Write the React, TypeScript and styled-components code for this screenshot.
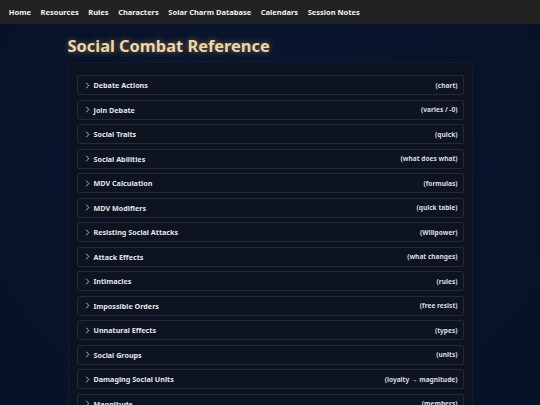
import React from "react";
import styled, { createGlobalStyle } from "styled-components";

const GlobalStyle = createGlobalStyle`
  *, *::before, *::after {
    box-sizing: border-box;
  }
  html, body {
    margin: 0;
    padding: 0;
    background: #09142b;
    font-family: "Noto Sans", "Open Sans", sans-serif;
  }
`;

const Page = styled.div`
  height: 405px;
  background: radial-gradient(ellipse at 50% 40%, #0b1733 0%, #08132a 60%, #071127 100%);
  overflow: hidden;
`;

const NavBar = styled.nav`
  display: flex;
  align-items: center;
  height: 24px;
  padding: 0 4px;
  background: #222222;
`;

const NavLink = styled.a`
  color: #f2f2f2;
  font-size: 7.5px;
  font-weight: 700;
  padding: 0 4.8px;
  text-decoration: none;
  white-space: nowrap;
`;

const Main = styled.main`
  width: 405px;
  margin: 0 auto;
`;

const Title = styled.h1`
  margin: 0;
  padding: 11px 0 5px;
  font-size: 16.4px;
  font-weight: 700;
  line-height: 22px;
  color: #ecd6ab;
  text-shadow: 0 0 6px rgba(240, 190, 100, 0.55);
`;

const Panel = styled.section`
  display: flex;
  flex-direction: column;
  gap: 4.5px;
  padding: 12px 8px;
  background: #0d1220;
  border: 1px solid #151b2a;
  border-radius: 6px;
`;

const Row = styled.div`
  display: flex;
  align-items: center;
  flex: none;
  height: 20px;
  padding: 0 5px 0 7px;
  background: #0e1320;
  border: 1px solid #222938;
  border-radius: 2px;
  color: #e2e6ec;
  font-size: 7.2px;
  font-weight: 700;
`;

const Chevron = styled.svg`
  width: 5px;
  height: 7px;
  margin-right: 4px;
  flex: none;
`;

const Label = styled.span`
  flex: 1;
`;

const Hint = styled.span`
  color: #d8dce2;
  font-size: 6.6px;
`;

const nav = ["Home", "Resources", "Rules", "Characters", "Solar Charm Database", "Calendars", "Session Notes"];

const sections: [string, string][] = [
  ["Debate Actions", "(chart)"],
  ["Join Debate", "(varies / -0)"],
  ["Social Traits", "(quick)"],
  ["Social Abilities", "(what does what)"],
  ["MDV Calculation", "(formulas)"],
  ["MDV Modifiers", "(quick table)"],
  ["Resisting Social Attacks", "(Willpower)"],
  ["Attack Effects", "(what changes)"],
  ["Intimacies", "(rules)"],
  ["Impossible Orders", "(free resist)"],
  ["Unnatural Effects", "(types)"],
  ["Social Groups", "(units)"],
  ["Damaging Social Units", "(loyalty \u2192 magnitude)"],
  ["Magnitude", "(members)"],
];

export default function App() {
  return (
    <Page>
      <GlobalStyle />
      <NavBar>
        {nav.map((n) => (
          <NavLink key={n}>{n}</NavLink>
        ))}
      </NavBar>
      <Main>
        <Title>Social Combat Reference</Title>
        <Panel>
          {sections.map(([label, hint]) => (
            <Row key={label}>
              <Chevron viewBox="0 0 5 8">
                <path d="M1 0.8 L4 4 L1 7.2" fill="none" stroke="#e2e6ec" strokeWidth="0.9" />
              </Chevron>
              <Label>{label}</Label>
              <Hint>{hint}</Hint>
            </Row>
          ))}
        </Panel>
      </Main>
    </Page>
  );
}
